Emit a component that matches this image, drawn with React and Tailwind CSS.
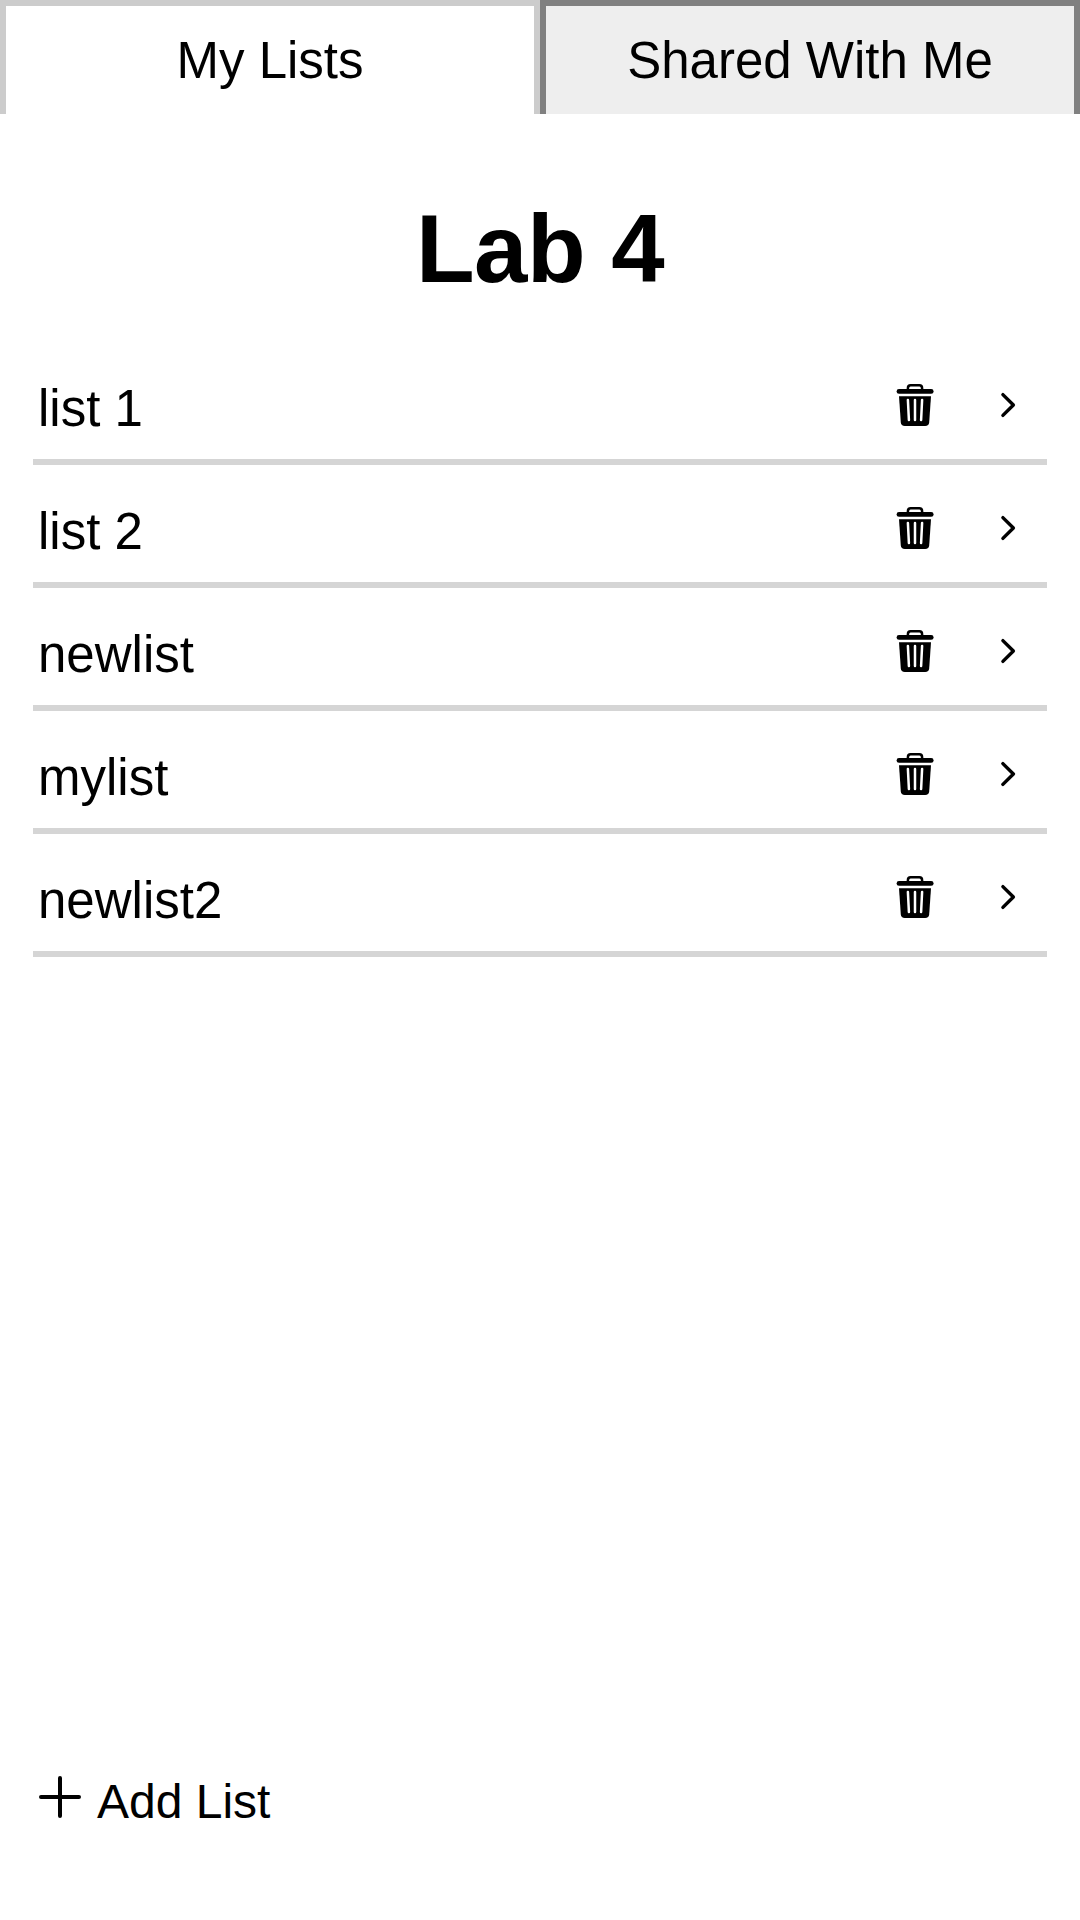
import React from "react";

const lists = ["list 1", "list 2", "newlist", "mylist", "newlist2"];

function TrashIcon() {
  return (
    <svg width="38" height="42" viewBox="0 0 38 42" className="block shrink-0">
      <path d="M11.9 6V4.2Q11.9 1.3 14.6 1.3H23.4Q26.1 1.3 26.1 4.2V6" fill="none" stroke="#000" strokeWidth="2.5" />
      <rect x="0.6" y="5" width="37" height="4.8" rx="2.4" />
      <path d="M3 12.2H35L33.2 38.2Q32.9 42 29.2 42H8.8Q5.1 42 4.8 38.2Z" />
      <path d="M11.9 16L12.9 36M19 16V36M26.1 16L25.1 36" stroke="#fff" strokeWidth="2.5" strokeLinecap="round" />
    </svg>
  );
}

function ChevronIcon() {
  return (
    <svg width="16" height="26" viewBox="0 0 16 26" className="block shrink-0">
      <path d="M2.9 2.6L13.4 13L2.9 23.4" fill="none" stroke="#000" strokeWidth="3.4" strokeLinecap="round" strokeLinejoin="round" />
    </svg>
  );
}

function PlusIcon() {
  return (
    <svg width="42" height="42" viewBox="0 0 42 42" className="mt-[2px] block shrink-0">
      <path d="M21 2V40M2 21H40" stroke="#000" strokeWidth="4" strokeLinecap="round" />
    </svg>
  );
}

export default function App() {
  return (
    <div className="flex h-[1920px] w-[1080px] flex-col bg-white font-['Liberation_Sans',Arial,sans-serif] text-black">
      <nav className="grid h-[114px] shrink-0 grid-cols-2 text-[51px] leading-[58px]">
        <button className="border-x-[6px] border-t-[6px] border-[#cccccc] bg-white pt-[2px]">My Lists</button>
        <button className="border-x-[6px] border-t-[6px] border-[#808080] bg-[#eeeeee] pt-[2px]">Shared With Me</button>
      </nav>
      <h1 className="mt-[80px] h-[148px] text-center text-[96px] font-bold leading-[110px] tracking-[-0.5px]">Lab 4</h1>
      <ul className="mx-[33px]">
        {lists.map((name) => (
          <li key={name} className="flex h-[123px] items-start border-b-[6px] border-[#d5d5d5] pl-[5px] pr-[31px]">
            <span className="mt-[38px] flex-1 text-[51px] leading-[58px]">{name}</span>
            <button className="mt-[42px]"><TrashIcon /></button>
            <button className="ml-[66px] mt-[50px]"><ChevronIcon /></button>
          </li>
        ))}
      </ul>
      <button className="mb-[90px] ml-[39px] mt-auto flex items-start gap-4 self-start">
        <PlusIcon />
        <span className="text-[48px] leading-[56px]">Add List</span>
      </button>
    </div>
  );
}
